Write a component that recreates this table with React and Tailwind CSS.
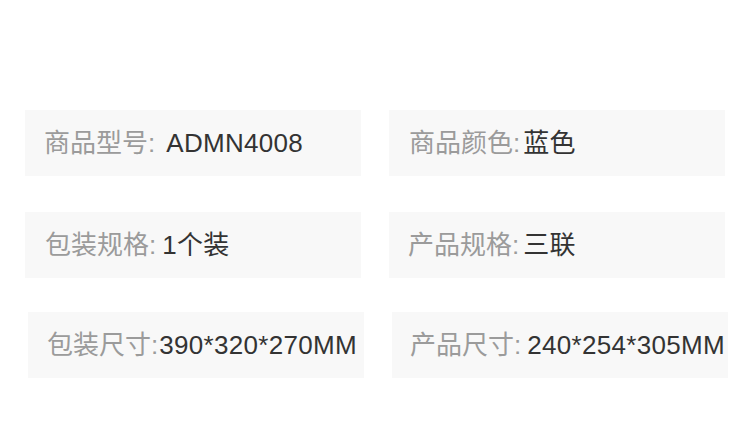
import React from 'react';

const rows = [
  {
    className: 'mt-[110px] pl-[25px]',
    items: [
      { label: '商品型号', value: 'ADMN4008', gap: 'ml-[11px]', pad: 'pl-[19px]' },
      { label: '商品颜色', value: '蓝色', gap: 'ml-[3px]', pad: 'pl-[20px]' },
    ],
  },
  {
    className: 'mt-[36px] pl-[25px]',
    items: [
      { label: '包装规格', value: '1个装', gap: 'ml-[6px]', pad: 'pl-[20px]' },
      { label: '产品规格', value: '三联', gap: 'ml-[4px]', pad: 'pl-[19px]' },
    ],
  },
  {
    className: 'mt-[34px] pl-[28px]',
    items: [
      { label: '包装尺寸', value: '390*320*270MM', gap: 'ml-[1px]', pad: 'pl-[19px]' },
      { label: '产品尺寸', value: '240*254*305MM', gap: 'ml-[6px]', pad: 'pl-[18px]' },
    ],
  },
];

function Cell({ label, value, gap, pad }) {
  return (
    <div className={`w-[336px] h-[66px] bg-[#f8f8f8] flex items-center ${pad}`}>
      <span className="text-[#9b9b9b]">{label}:</span>
      <span className={`text-[#333333] tracking-[0.3px] ${gap}`}>{value}</span>
    </div>
  );
}

export default function App() {
  return (
    <div
      className="w-[750px] h-[443px] bg-white overflow-hidden text-[26px] leading-none"
      style={{ fontFamily: '"Liberation Sans", "Noto Sans CJK SC", sans-serif' }}
    >
      {rows.map((row, i) => (
        <div key={i} className={`flex gap-[28px] ${row.className}`}>
          {row.items.map((it) => (
            <Cell key={it.label} {...it} />
          ))}
        </div>
      ))}
    </div>
  );
}
